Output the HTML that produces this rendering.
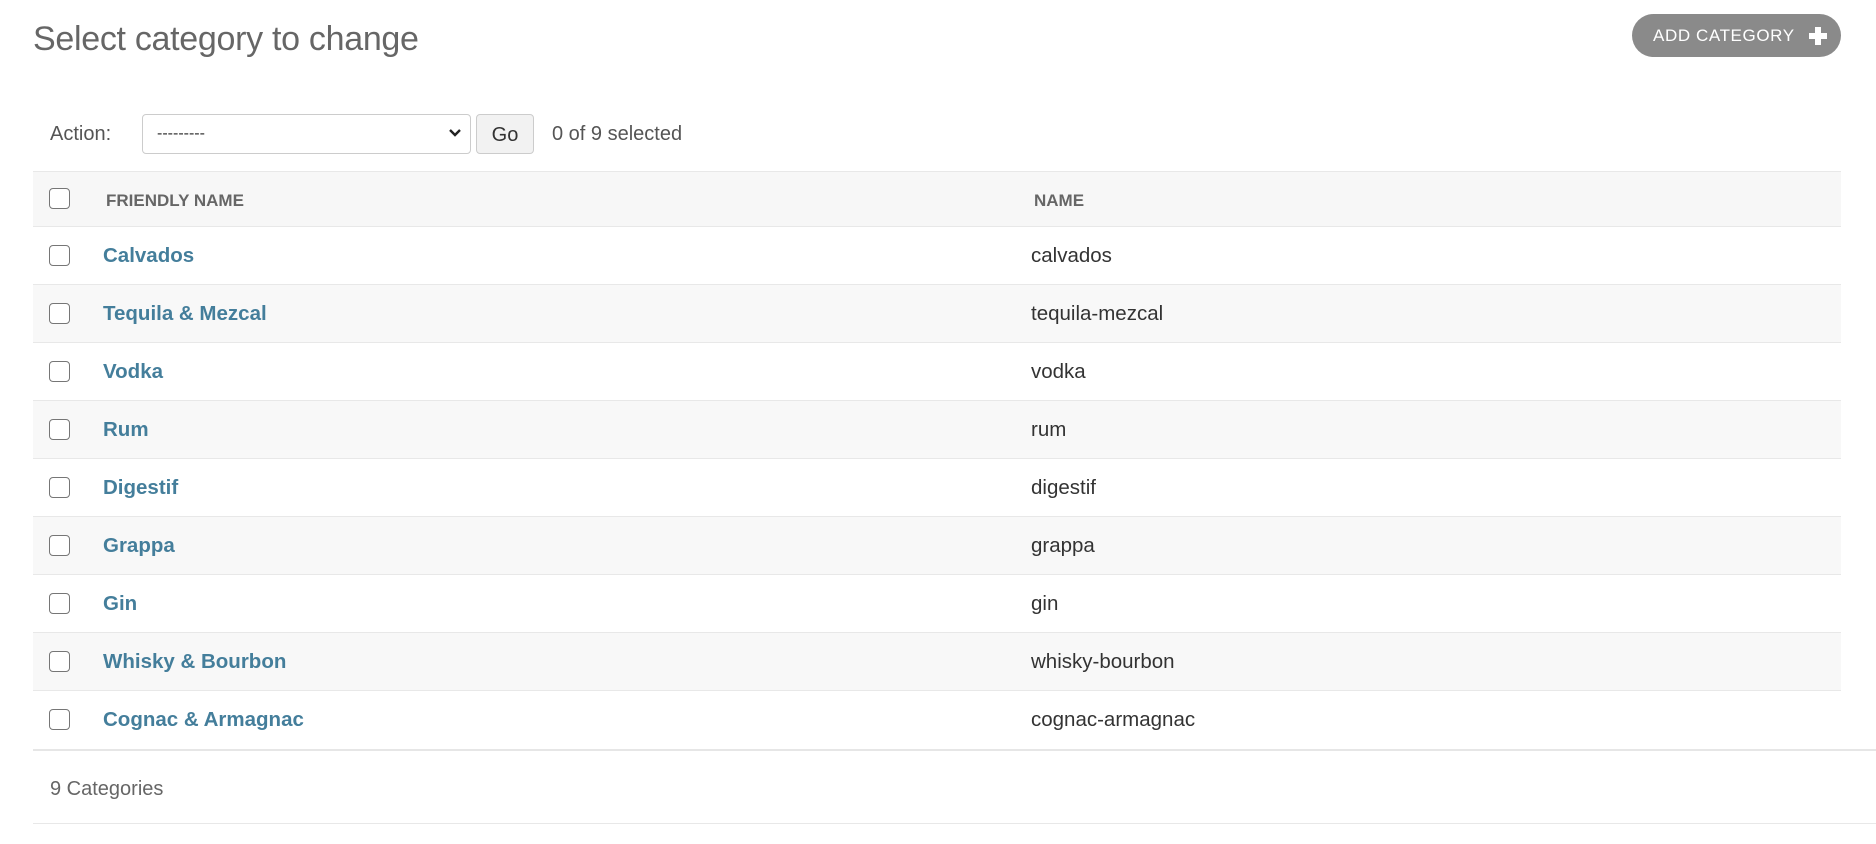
<!DOCTYPE html>
<html><head><meta charset="utf-8"><style>
*{box-sizing:border-box;margin:0;padding:0}
body{width:1876px;height:844px;background:#fff;font-family:"Liberation Sans",sans-serif;color:#333;position:relative;overflow:hidden}
h1{position:absolute;left:33px;top:20px;font-size:34px;font-weight:normal;color:#666;letter-spacing:-0.3px}
.add{position:absolute;left:1632px;top:14px;width:209px;height:43px;border-radius:22px;background:#8a8a8a;color:#fff;font-size:17px;letter-spacing:0.6px;line-height:43px;padding-left:21px}
.add .p{position:absolute;right:14px;top:13px;width:18px;height:18px}
.add .p:before{content:"";position:absolute;left:6px;top:0;width:6px;height:18px;background:#fff}
.add .p:after{content:"";position:absolute;left:0;top:6px;width:18px;height:6px;background:#fff}
.act{position:absolute;left:50px;top:123px;font-size:20px;color:#555}
.sel{position:absolute;left:142px;top:114px;width:329px;height:40px;border:1px solid #ccc;border-radius:4px;background:#fff;font-size:16px;padding:10px 14px;color:#333}
.sel svg{position:absolute;right:8px;top:13px}
.go{position:absolute;left:476px;top:114px;width:58px;height:40px;border:1px solid #ccc;border-radius:4px;background:#f2f2f2;font-size:20px;text-align:center;line-height:40px;color:#333}
.cnt{position:absolute;left:552px;top:123px;font-size:20px;color:#555}
.tbl{position:absolute;left:33px;top:171px;width:1808px}
.row{height:58px;border-bottom:1.5px solid #e8e8e8;position:relative;font-size:20.5px}
.row.h{height:56px;background:#f7f7f7;border-top:1.5px solid #e8e8e8;font-size:17px;font-weight:bold;color:#666}
.row.alt{background:#f8f8f8}
.cb{position:absolute;left:16px;top:18px;width:21px;height:21px;border:1.5px solid #767676;border-radius:4px;background:#fff}
.h .cb{top:16px}
.c1{position:absolute;left:70px;top:17px}
.h .c1{left:73px;top:19px}
.c2{position:absolute;left:998px;top:17px}
.h .c2{left:1001px;top:19px}
a{color:#447e9b;font-weight:bold;text-decoration:none}
.foot{position:absolute;left:33px;top:749px;width:1843px;height:75px;border-top:2px solid #e6e6e6}
.bot{position:absolute;left:33px;top:823px;width:1843px;border-top:1.5px solid #e8e8e8}
.foot span{position:absolute;left:17px;top:27px;font-size:20px;color:#666}
</style></head><body>
<h1>Select category to change</h1>
<div class="add">ADD CATEGORY<span class="p"></span></div>
<div class="act">Action:</div>
<div class="sel">---------<svg width="14" height="10" viewBox="0 0 14 10"><path d="M2 2l5 5 5-5" stroke="#222" stroke-width="2.4" fill="none"/></svg></div>
<div class="go">Go</div>
<div class="cnt">0 of 9 selected</div>
<div class="tbl">
<div class="row h"><span class="cb"></span><span class="c1">FRIENDLY NAME</span><span class="c2">NAME</span></div>
<div class="row"><span class="cb"></span><a class="c1">Calvados</a><span class="c2">calvados</span></div>
<div class="row alt"><span class="cb"></span><a class="c1">Tequila &amp; Mezcal</a><span class="c2">tequila-mezcal</span></div>
<div class="row"><span class="cb"></span><a class="c1">Vodka</a><span class="c2">vodka</span></div>
<div class="row alt"><span class="cb"></span><a class="c1">Rum</a><span class="c2">rum</span></div>
<div class="row"><span class="cb"></span><a class="c1">Digestif</a><span class="c2">digestif</span></div>
<div class="row alt"><span class="cb"></span><a class="c1">Grappa</a><span class="c2">grappa</span></div>
<div class="row"><span class="cb"></span><a class="c1">Gin</a><span class="c2">gin</span></div>
<div class="row alt"><span class="cb"></span><a class="c1">Whisky &amp; Bourbon</a><span class="c2">whisky-bourbon</span></div>
<div class="row" style="border-bottom:none"><span class="cb"></span><a class="c1">Cognac &amp; Armagnac</a><span class="c2">cognac-armagnac</span></div>
</div>
<div class="foot"><span>9 Categories</span></div>
<div class="bot"></div>
</body></html>
